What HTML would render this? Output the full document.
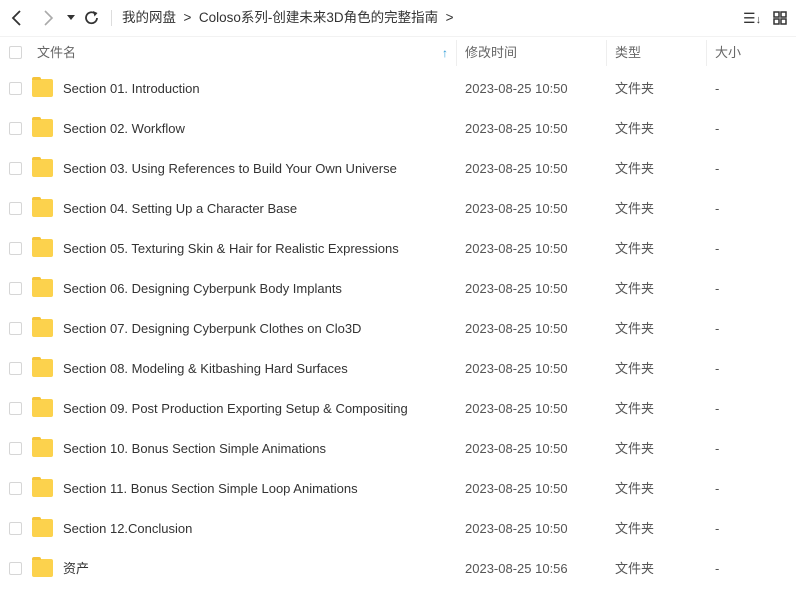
<!DOCTYPE html>
<html><head><meta charset="utf-8"><style>
*{margin:0;padding:0;box-sizing:border-box}
body{width:796px;height:591px;background:#fff;font-family:"Liberation Sans","Noto Sans CJK SC",sans-serif;color:#333;position:relative;overflow:hidden;font-size:13px}
.a{position:absolute;white-space:nowrap}
.l{line-height:41px;top:0}
.cb{position:absolute;left:9px;width:13px;height:13px;border:1px solid #d6d6d6;border-radius:2px;background:#fff}
.fd{position:absolute;left:32px;width:21px;height:18px;background:#fcd24d;border-radius:2px}
.fd:before{content:"";position:absolute;left:0;top:-2px;width:9px;height:3px;background:#f5c33a;border-radius:2px 2px 0 0}
.row{position:absolute;left:0;width:796px;height:40px}
.t{color:#555}
.g{color:#666}
</style></head><body>
<svg class="a" style="left:10px;top:9px" width="14" height="18"><path d="M10 2 L3 9 L10 16" stroke="#333" stroke-width="1.8" fill="none"/></svg>
<svg class="a" style="left:41px;top:9px" width="14" height="18"><path d="M4 2 L11 9 L4 16" stroke="#aaa" stroke-width="1.6" fill="none"/></svg>
<svg class="a" style="left:67px;top:15px" width="8" height="6"><path d="M0 0 L8 0 L4 5Z" fill="#333"/></svg>
<svg class="a" style="left:84px;top:10px" width="16" height="16"><path d="M13 8 A5.5 5.5 0 1 1 11 3.5" stroke="#333" stroke-width="1.8" fill="none"/><path d="M9 1 L13.5 3 L10.5 6.5Z" fill="#333"/></svg>
<div class="a" style="left:111px;top:10px;width:1px;height:16px;background:#ddd"></div>
<div class="a" style="left:122px;top:0;line-height:36px;font-size:13.5px;color:#333">我的网盘 &nbsp;&gt;&nbsp; Coloso系列-创建未来3D角色的完整指南 &nbsp;&gt;</div>
<div class="a" style="left:743px;top:0;line-height:36px;font-size:14px;color:#333">☰<span style="font-size:11px">↓</span></div>
<svg class="a" style="left:773px;top:11px" width="14" height="14"><g fill="none" stroke="#333" stroke-width="1.5"><rect x="1" y="1" width="5" height="5"/><rect x="8" y="1" width="5" height="5"/><rect x="1" y="8" width="5" height="5"/><rect x="8" y="8" width="5" height="5"/></g></svg>
<div class="a" style="left:0;top:36px;width:796px;height:1px;background:#f2f2f2"></div>
<div class="cb" style="top:46px"></div>
<div class="a g" style="left:37px;top:33px;line-height:40px">文件名</div>
<div class="a" style="left:442px;top:33px;line-height:40px;color:#2a9ad6;font-size:12px;font-weight:bold">↑</div>
<div class="a" style="left:456px;top:40px;width:1px;height:26px;background:#eee"></div>
<div class="a g" style="left:465px;top:33px;line-height:40px">修改时间</div>
<div class="a" style="left:606px;top:40px;width:1px;height:26px;background:#eee"></div>
<div class="a g" style="left:615px;top:33px;line-height:40px">类型</div>
<div class="a" style="left:706px;top:40px;width:1px;height:26px;background:#eee"></div>
<div class="a g" style="left:715px;top:33px;line-height:40px">大小</div>
<div id="rows"></div>
<script>
var n=["Section 01. Introduction","Section 02. Workflow","Section 03. Using References to Build Your Own Universe","Section 04. Setting Up a Character Base","Section 05. Texturing Skin &amp; Hair for Realistic Expressions","Section 06. Designing Cyberpunk Body Implants","Section 07. Designing Cyberpunk Clothes on Clo3D","Section 08. Modeling &amp; Kitbashing Hard Surfaces","Section 09. Post Production Exporting Setup &amp; Compositing","Section 10. Bonus Section Simple Animations","Section 11. Bonus Section Simple Loop Animations","Section 12.Conclusion","资产"];
var h="";
n.forEach(function(s,i){var y=68+i*40;var d=i==12?"2023-08-25 10:56":"2023-08-25 10:50";
h+='<div class="row" style="top:'+y+'px"><div class="cb" style="top:14px"></div><div class="fd" style="top:11px"></div><div class="a l" style="left:63px">'+s+'</div><div class="a l t" style="left:465px">'+d+'</div><div class="a l t" style="left:615px">文件夹</div><div class="a l t" style="left:715px">-</div></div>';});
document.getElementById("rows").innerHTML=h;
</script>
</body></html>
